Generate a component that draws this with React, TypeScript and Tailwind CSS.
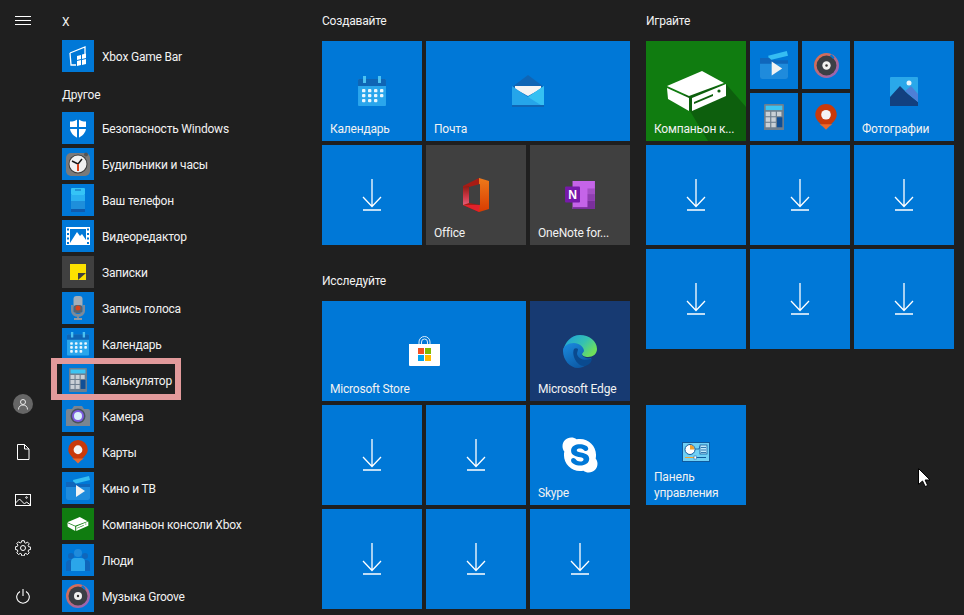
import React from "react";
import { FaSkype } from "react-icons/fa";

const Calendar = ({ w = 22 }: { w?: number }) => (
  <svg width={w} height={w * 1.07} viewBox="0 0 28 30">
    <rect x="0" y="3" width="28" height="27" rx="1" fill="#2aa6ec" />
    <path d="M0 4a1 1 0 0 1 1-1h26a1 1 0 0 1 1 1v6H0z" fill="#0f65b5" />
    <rect x="5" y="0" width="3" height="7" fill="#4cc2f1" />
    <rect x="20" y="0" width="3" height="7" fill="#4cc2f1" />
    {[13, 18, 23].map((y) =>
      [4, 10, 16, 22].map((x) =>
        y === 23 && x === 22 ? null : <rect key={x + "-" + y} x={x} y={y} width="3.4" height="3.4" rx="1" fill="#eaf6fd" />
      )
    )}
  </svg>
);

const Mail = () => (
  <svg width="32" height="32" viewBox="0 0 32 32">
    <polygon points="0,12 16,0 32,12 32,20 0,20" fill="#0f65b5" />
    <polygon points="3,11 29,11 29,14 16,21 3,14" fill="#f4f4f4" />
    <polygon points="0,11 16,22 32,11 32,32 0,32" fill="#25a5ea" />
    <polygon points="32,11 32,32 16,22" fill="#35c0f2" />
    <rect x="0" y="30" width="32" height="2" fill="#0f65b5" />
  </svg>
);

const Office = () => (
  <svg width="26" height="34" viewBox="0 0 26 34">
    <defs>
      <linearGradient id="officeL" x1="0" y1="0" x2="0" y2="1">
        <stop offset="0" stopColor="#8f1a12" />
        <stop offset="0.6" stopColor="#d13a4a" />
        <stop offset="1" stopColor="#e0607a" />
      </linearGradient>
      <linearGradient id="officeR" x1="0" y1="0" x2="0" y2="1">
        <stop offset="0" stopColor="#ee7a1a" />
        <stop offset="1" stopColor="#d83b01" />
      </linearGradient>
    </defs>
    <polygon points="16,0 0,8 0,27 16,34" fill="#a81b14" />
    <polygon points="0,9 6,8 6,25 0,27" fill="url(#officeL)" />
    <polygon points="16,0 26,3 26,31 16,34" fill="url(#officeR)" />
    <polygon points="6,9 17,6 17,27 6,25" fill="#404040" />
    <polygon points="0,27 17,27 16,34" fill="#e2212b" />
  </svg>
);

const OneNote = () => (
  <svg width="32" height="28" viewBox="0 0 32 30">
    <rect x="8" y="0" width="24" height="30" fill="#c564e8" />
    <rect x="24" y="8" width="8" height="6" fill="#a44fc4" />
    <rect x="24" y="14" width="8" height="7" fill="#8f3fb0" />
    <rect x="24" y="21" width="8" height="9" fill="#7a2f9c" />
    <rect x="8" y="28" width="24" height="2" fill="#7a2f9c" />
    <rect x="0" y="6" width="16" height="17" rx="1" fill="#7719aa" />
    <text x="8" y="19.5" textAnchor="middle" fontFamily="'Liberation Sans', sans-serif" fontWeight="700" fontSize="13" fill="#fff">N</text>
  </svg>
);

const ConsoleShapes = ({ slit }: { slit: string }) => (
  <>
    <polygon points="21,45 56,30 78,42 43,55" fill="#fff" />
    <polygon points="21,47 43,57 43,70 22,58" fill="#fff" />
    <polygon points="46,57 80,43 80,55 46,70" fill="#fff" />
    <polygon points="48,61 67,53 67,55 48,63" fill={slit} />
    <circle cx="73" cy="50" r="1.6" fill={slit} />
  </>
);

const ConsoleSmall = () => (
  <svg width="22" height="16" viewBox="20 28 62 44">
    <ConsoleShapes slit="#107c10" />
  </svg>
);

const Clock = () => (
  <svg width="24" height="24" viewBox="0 0 24 24">
    <rect x="0" y="1" width="24" height="23" rx="5" fill="#7a7a7a" />
    <circle cx="20" cy="2.5" r="2" fill="#555" />
    <circle cx="12" cy="12" r="9.5" fill="#3d3d3d" />
    <circle cx="12" cy="12" r="8.5" fill="#f1f1f1" />
    <path d="M6 9l6 3 4-5" stroke="#1a1a1a" strokeWidth="1.5" fill="none" />
    <path d="M12 12v7" stroke="#d8431b" strokeWidth="2" />
  </svg>
);

const Phone = () => (
  <svg width="14" height="24" viewBox="0 0 14 24">
    <rect width="14" height="7" rx="1" fill="#35c4f6" />
    <rect x="4" y="1.5" width="6" height="1" fill="#0f65b5" />
    <rect y="7" width="14" height="6" fill="#2ab0f0" />
    <rect y="13" width="14" height="8" fill="#1e8fdb" />
    <rect y="21" width="14" height="3" fill="#0f5bad" />
  </svg>
);

const Shield = () => (
  <svg width="16" height="19" viewBox="0 0 16 19">
    <path d="M8 0c2 1.6 5 2.6 8 2.6V9c0 4.500-3.500 8-8 10-4.500-2-8-5.500-8-10V2.600C3 2.600 6 1.600 8 0z" fill="#fff" />
    <rect x="7" y="0" width="2" height="19" fill="#0078d7" />
    <rect x="0" y="8" width="16" height="2" fill="#0078d7" />
  </svg>
);

const Video = () => (
  <svg width="24" height="18" viewBox="0 0 24 18">
    <rect width="24" height="18" fill="#fff" />
    <rect x="4" y="2" width="16" height="14" fill="#0078d7" />
    {[1.500, 6, 10.500, 15].map((y) => (
      <React.Fragment key={y}>
        <rect x="1" y={y} width="2" height="2" fill="#0078d7" />
        <rect x="21" y={y} width="2" height="2" fill="#0078d7" />
      </React.Fragment>
    ))}
    <polygon points="4,16 11,5 14,9 16,7 20,13 20,16" fill="#fff" />
  </svg>
);

const Note = () => (
  <svg width="16" height="16" viewBox="0 0 16 16">
    <rect width="16" height="16" fill="#fce100" />
    <polygon points="8,16 8,9 16,9" fill="#404040" />
  </svg>
);

const Mic = () => (
  <svg width="14" height="24" viewBox="0 0 14 24">
    <path d="M0 9h2v5a5 4 0 0 0 10 0V9h2v6a7 6 0 0 1-14 0z" fill="#7d8a99" />
    <rect x="2.500" y="0" width="9" height="17" rx="3" fill="#a4aeb8" />
    <rect x="2.500" y="9" width="9" height="8" rx="3" fill="#566472" />
    <circle cx="7" cy="12" r="2.500" fill="#d8431b" />
    <rect x="6" y="19" width="2" height="3" fill="#7d8a99" />
    <rect x="3" y="22" width="8" height="2" fill="#8f9aa5" />
  </svg>
);

const Calc = ({ w = 18 }: { w?: number }) => (
  <svg width={w} height={w * 1.33} viewBox="0 0 18 24">
    <rect width="18" height="24" rx="1" fill="#6e7f8f" />
    <rect x="1.500" y="1.500" width="15" height="4" fill="#3dc4f2" />
    {[7, 12, 17].map((y) =>
      [1.500, 6.600, 11.700].map((x) =>
        x === 11.700 && y > 7 ? null : <rect key={x + "-" + y} x={x} y={y} width="4" height="4" fill="#c9d0d6" />
      )
    )}
    <rect x="11.700" y="12" width="4.800" height="9" fill="#0f4f96" />
  </svg>
);

const Camera = () => (
  <svg width="24" height="20" viewBox="0 0 24 20">
    <path d="M0 5a2 2 0 0 1 2-2h4l2-3h8l2 3h4a2 2 0 0 1 2 2v15H0z" fill="#7a8591" />
    <circle cx="12" cy="10" r="7.500" fill="#47525e" />
    <circle cx="12" cy="10" r="6" fill="#7d5ce0" />
    <circle cx="12" cy="10" r="4" fill="#d9f0fb" />
  </svg>
);

const MapPin = ({ w = 20 }: { w?: number }) => (
  <svg width={w} height={w * 1.17} viewBox="0 0 20 24">
    <path d="M10 0a10 10 0 0 1 10 10c0 4-4 8-7 10l-3 3-3-3C4 18 0 14 0 10A10 10 0 0 1 10 0z" fill="#c93a0b" />
    <path d="M4 19h12l-3 2-3 3-3-3z" fill="#ea6a2e" />
    <circle cx="10" cy="10" r="4.500" fill="#f4f4f4" />
  </svg>
);

const Movies = ({ w = 24 }: { w?: number }) => (
  <svg width={w} height={w} viewBox="0 0 24 24">
    <polygon points="7,4 23,0 24,4 8,8" fill="#35bdf2" />
    <path d="M0 6h8l2 2h14v14a2 2 0 0 1-2 2H2a2 2 0 0 1-2-2z" fill="#0f66bb" />
    <path d="M0 11h24v11a2 2 0 0 1-2 2H2a2 2 0 0 1-2-2z" fill="#1f8bdc" />
    <polygon points="10,9 10,21 19,15" fill="#f2f2f2" />
  </svg>
);

const People = () => (
  <svg width="24" height="22" viewBox="0 0 24 22">
    <circle cx="5" cy="7" r="3" fill="#0f66bb" />
    <circle cx="19" cy="7" r="3" fill="#0f66bb" />
    <path d="M0 22v-7a4 4 0 0 1 4-4h16a4 4 0 0 1 4 4v7z" fill="#0f66bb" />
    <circle cx="12" cy="4" r="4" fill="#1f8bdc" />
    <path d="M5 22v-9a4 4 0 0 1 4-4h6a4 4 0 0 1 4 4v9z" fill="#2ba6ea" />
  </svg>
);

const Groove = ({ w = 24 }: { w?: number }) => (
  <svg width={w} height={w} viewBox="0 0 24 24">
    <defs>
      <linearGradient id={"groove" + w} x1="0" y1="0" x2="1" y2="1">
        <stop offset="0" stopColor="#e8703a" />
        <stop offset="1" stopColor="#8a63c9" />
      </linearGradient>
    </defs>
    <circle cx="12" cy="12" r="12" fill={"url(#groove" + w + ")"} />
    <circle cx="12" cy="12" r="9.500" fill="#3b3f45" />
    <circle cx="12" cy="12" r="4" fill="#f1f1f1" />
    <circle cx="12" cy="12" r="1.200" fill="#333" />
    <path d="M16 2l3 3" stroke="#0078d7" strokeWidth="2" />
  </svg>
);

const GameBar = () => (
  <svg width="18" height="21" viewBox="0 0 18 21" fill="none">
    <path d="M1 7l15-6v7M7 19H2L1 7" stroke="#fff" strokeWidth="1.300" />
    <polygon points="8,10 12,9 12,13 8,14" fill="#fff" />
    <polygon points="13,8.500 17,7.500 17,12 13,13" fill="#fff" />
    <polygon points="8,15 12,14 12,19 8,20" fill="#fff" />
    <polygon points="13,14 17,13 17,18 13,19" fill="#fff" />
  </svg>
);

const Store = () => (
  <svg width="31" height="30" viewBox="0 0 31 30">
    <path d="M10 9V6a5.500 5.500 0 0 1 11 0v3M12.500 9V6a3 3 0 0 1 6 0v3" stroke="#fff" strokeWidth="1" fill="none" opacity="0.85" />
    <path d="M0 8h31v21a1 1 0 0 1-1 1H1a1 1 0 0 1-1-1z" fill="#fff" />
    <rect x="9" y="12" width="6" height="6" fill="#f25022" />
    <rect x="16" y="12" width="6" height="6" fill="#7fba00" />
    <rect x="9" y="19" width="6" height="6" fill="#00a4ef" />
    <rect x="16" y="19" width="6" height="6" fill="#ffb900" />
  </svg>
);

const Edge = () => (
  <svg width="34" height="33" viewBox="0 0 34 33">
    <defs>
      <linearGradient id="edgeA" x1="0" y1="0" x2="1" y2="0.600">
        <stop offset="0" stopColor="#1b9de2" />
        <stop offset="0.600" stopColor="#35c1b1" />
        <stop offset="1" stopColor="#6fe05a" />
      </linearGradient>
      <linearGradient id="edgeB" x1="0" y1="0" x2="0.600" y2="1">
        <stop offset="0" stopColor="#1b8be0" />
        <stop offset="1" stopColor="#0c59a4" />
      </linearGradient>
    </defs>
    <path d="M17 0c9 0 17 6 17 14 0 5-4 8-9 8-3 0-6-1-6-3 0-1 1-2 1-3 0-4-4-7-9-7-5 0-9 3-11 7C2 7 8 0 17 0z" fill="url(#edgeA)" />
    <path d="M0 16c0-5 5-8 11-8 5 0 10 4 10 8 0 1-2 2-2 3 0 3 5 5 8 4 1 0 2 0 1 1-3 5-7 9-13 9C7 33 0 25 0 16z" fill="url(#edgeB)" />
    <path d="M11 14c-2 4 0 12 6 16 4 2 8 1 11-3l1-3-2 0c-5 2-12 0-13-5 0-2 1-3 1-5-1-1-3-1-4 0z" fill="#0a4a8f" />
  </svg>
);

const Photos = () => (
  <svg width="28" height="29" viewBox="0 0 28 29">
    <rect width="28" height="29" rx="1" fill="#2aa8ea" />
    <polygon points="0,20 10,9 18,17 28,25 28,29 0,29" fill="#12407f" />
    <polygon points="15,14 21,9 28,17 28,25" fill="#4e7fd6" />
    <circle cx="19" cy="6" r="2.500" fill="#e8f6fd" />
  </svg>
);

const Panel = () => (
  <svg width="28" height="20" viewBox="0 0 28 20">
    <rect width="28" height="20" fill="#0f5a9e" />
    <rect x="1" y="1" width="26" height="18" fill="#6fd0f5" />
    <circle cx="8" cy="7.500" r="5" fill="#fff" stroke="#0f5a9e" strokeWidth="1" />
    <path d="M8 7.500V3a4.500 4.500 0 0 1 4.500 4.500z" fill="#f0a030" />
    <path d="M13 7h4l1-3" stroke="#0f5a9e" strokeWidth="0.800" fill="none" />
    <rect x="18" y="3" width="7" height="9" fill="#bfeafb" stroke="#0f5a9e" strokeWidth="0.800" />
    <path d="M19 5.500h5M19 8h5M19 10.500h5" stroke="#0f5a9e" strokeWidth="0.800" />
    <rect x="3" y="15" width="9" height="1" fill="#f0a030" />
    <rect x="12" y="15" width="12" height="1" fill="#0f5a9e" />
    <rect x="12" y="14" width="2.500" height="3" fill="#fff" stroke="#0f5a9e" strokeWidth="0.500" />
  </svg>
);

const Download = () => (
  <svg width="20" height="32" viewBox="0 0 20 32" fill="none" stroke="#fff" strokeWidth="1.300">
    <path d="M10 0v27.500M1 18l9 9.500 9-9.500" />
    <path d="M1 31h18" strokeWidth="1.500" />
  </svg>
);

const rows: [string, React.ReactNode, string?, boolean?][] = [
  ["Безопасность Windows", <Shield />],
  ["Будильники и часы", <Clock />],
  ["Ваш телефон", <Phone />],
  ["Видеоредактор", <Video />],
  ["Записки", <Note />, "bg-[#404040]"],
  ["Запись голоса", <Mic />],
  ["Календарь", <Calendar />],
  ["Калькулятор", <Calc />, undefined, true],
  ["Камера", <Camera />],
  ["Карты", <MapPin />],
  ["Кино и ТВ", <Movies />],
  ["Компаньон консоли Xbox", <ConsoleSmall />, "bg-[#107c10]"],
  ["Люди", <People />],
  ["Музыка Groove", <Groove />],
];

function Row({ label, icon, bg = "bg-[#0078d7]", mark }: { label: string; icon: React.ReactNode; bg?: string; mark?: boolean }) {
  return (
    <div className="relative flex h-8 shrink-0 items-center">
      <div className={"flex h-8 w-8 items-center justify-center " + bg}>{icon}</div>
      <span className="ml-2 whitespace-nowrap pt-[2px]">{label}</span>
      {mark && <div className="absolute left-[-11px] top-[-6px] h-[42px] w-[130px] border-[6px] border-[#e29a9b]" />}
    </div>
  );
}

function Tile({ label, icon, bg = "bg-[#0078d7]", className = "" }: { label?: string; icon: React.ReactNode; bg?: string; className?: string }) {
  return (
    <div className={"flex h-[100px] flex-col " + bg + " " + className}>
      <div className="mt-[30px] flex h-10 items-center justify-center">{icon}</div>
      <div className="mt-[10px] truncate px-2">{label}</div>
    </div>
  );
}

const DL = ({ className = "" }: { className?: string }) => (
  <div className={"flex h-[100px] items-center justify-center bg-[#0078d7] " + className}>
    <Download />
  </div>
);

const Small = ({ children }: { children: React.ReactNode }) => (
  <div className="flex h-12 w-12 items-center justify-center bg-[#0078d7]">{children}</div>
);

export default function App() {
  return (
    <div className="flex h-[615px] w-[964px] overflow-hidden bg-[#1f1f1f] font-['Roboto','Noto_Sans',sans-serif] text-[12px] leading-4 tracking-[-0.2px] text-[#f2f2f2]">
      {/* rail */}
      <div className="flex w-[46px] shrink-0 flex-col items-center text-white">
        <div className="flex h-[41px] w-full shrink-0 items-center justify-center">
          <div className="flex w-4 flex-col gap-[3px]">
            <div className="h-px bg-white" />
            <div className="h-px bg-white" />
            <div className="h-px bg-white" />
          </div>
        </div>
        <div className="mt-[339px] flex h-12 shrink-0 items-center justify-center">
          <div className="flex h-5 w-5 items-center justify-center rounded-full bg-[#666666]">
            <svg width="10" height="11" viewBox="0 0 10 11" fill="none" stroke="#e8e8e8" strokeWidth="1">
              <circle cx="5" cy="3" r="2.500" />
              <path d="M0.500 10.500c0-3 2-4.500 4.500-4.500s4.500 1.500 4.500 4.500" />
            </svg>
          </div>
        </div>
        <div className="flex h-12 shrink-0 items-center justify-center">
          <svg width="14" height="16" viewBox="0 0 14 16" fill="none" stroke="#fff" strokeWidth="1">
            <path d="M1.500.500h7l4.500 4.500v10.500H1.500zM8.500.500V5H13" />
          </svg>
        </div>
        <div className="flex h-12 shrink-0 items-center justify-center">
          <svg width="16" height="12" viewBox="0 0 16 12" fill="none" stroke="#fff" strokeWidth="1">
            <rect x=".5" y=".5" width="15" height="11" />
            <path d="M.5 9l4-4 5 5 2-2 4 3" />
            <circle cx="11.500" cy="3.500" r=".8" />
          </svg>
        </div>
        <div className="flex h-12 shrink-0 items-center justify-center">
          <svg width="16" height="16" viewBox="0 0 16 16" fill="none" stroke="#fff" strokeWidth="1">
            <circle cx="8" cy="8" r="2.500" />
            <path d="M6.800.7h2.400l.4 2 1.200.5 1.700-1.100 1.700 1.700-1.100 1.700.5 1.200 2 .4v2.400l-2 .4-.5 1.200 1.100 1.700-1.700 1.700-1.700-1.100-1.200.5-.4 2H6.800l-.4-2-1.200-.5-1.700 1.100-1.700-1.700 1.100-1.700-.5-1.200-2-.4V6.800l2-.4.5-1.200-1.100-1.700 1.700-1.700 1.700 1.100 1.200-.5z" />
          </svg>
        </div>
        <div className="flex h-12 shrink-0 items-center justify-center">
          <svg width="14" height="15" viewBox="0 0 14 15" fill="none" stroke="#fff" strokeWidth="1.100">
            <path d="M7 0v7M4 2.400a6.300 6.300 0 1 0 6 0" />
          </svg>
        </div>
      </div>

      {/* list */}
      <div className="ml-4 flex w-[260px] shrink-0 flex-col gap-1 pt-1">
        <div className="flex h-8 shrink-0 items-center pt-1">X</div>
        <Row label="Xbox Game Bar" icon={<GameBar />} />
        <div className="flex h-8 shrink-0 items-center pt-[5px]">Другое</div>
        {rows.map(([l, i, b, m]) => (
          <Row key={l} label={l} icon={i} bg={b} mark={m} />
        ))}
      </div>

      {/* groups */}
      <div className="flex w-[308px] shrink-0 flex-col">
        <div className="flex h-[41px] shrink-0 items-center">Создавайте</div>
        <div className="grid grid-cols-[100px_100px_100px] gap-1">
          <Tile label="Календарь" icon={<Calendar w={28} />} />
          <Tile label="Почта" icon={<Mail />} className="col-span-2" />
          <DL />
          <Tile label="Office" icon={<Office />} bg="bg-[#404040]" />
          <Tile label="OneNote for..." icon={<OneNote />} bg="bg-[#404040]" />
        </div>
        <div className="mt-4 flex h-10 shrink-0 items-center">Исследуйте</div>
        <div className="grid grid-cols-[100px_100px_100px] gap-1">
          <Tile label="Microsoft Store" icon={<Store />} className="col-span-2" />
          <Tile label="Microsoft Edge" icon={<Edge />} bg="bg-[#173a72]" />
          <DL />
          <DL />
          <Tile label="Skype" icon={<FaSkype size={40} color="#fff" />} />
          <DL />
          <DL />
          <DL />
        </div>
      </div>

      <div className="ml-4 flex w-[308px] shrink-0 flex-col">
        <div className="flex h-[41px] shrink-0 items-center">Играйте</div>
        <div className="grid grid-cols-[100px_100px_100px] gap-1">
          <div className="relative flex h-[100px] flex-col justify-end bg-[#107c10]">
            <svg className="absolute inset-0" width="100" height="100" viewBox="0 0 100 100">
              <polygon points="80,43 100,66 100,100 62,100 44,70 22,58" fill="#0d5f0d" />
              <ConsoleShapes slit="#0d5f0d" />
            </svg>
            <div className="relative truncate px-2 pb-1">Компаньон к...</div>
          </div>
          <div className="grid grid-cols-[48px_48px] gap-1">
            <Small><Movies w={28} /></Small>
            <Small><Groove w={25} /></Small>
            <Small><Calc w={20} /></Small>
            <Small><MapPin w={22} /></Small>
          </div>
          <Tile label="Фотографии" icon={<Photos />} />
          <DL /><DL /><DL /><DL /><DL /><DL />
        </div>
        <div className="mt-14 flex h-[100px] w-[100px] flex-col bg-[#0078d7]">
          <div className="mt-[30px] flex h-[34px] items-center justify-center"><Panel /></div>
          <div className="px-2 pb-1">Панель управления</div>
        </div>
      </div>

      <svg className="absolute left-[918px] top-[468px]" width="12" height="19" viewBox="0 0 12 19">
        <path d="M.5.500v16l4-3.500 2.700 5.500 2.500-1-2.600-5.500h5z" fill="#fff" stroke="#000" strokeWidth="1" />
      </svg>
    </div>
  );
}
